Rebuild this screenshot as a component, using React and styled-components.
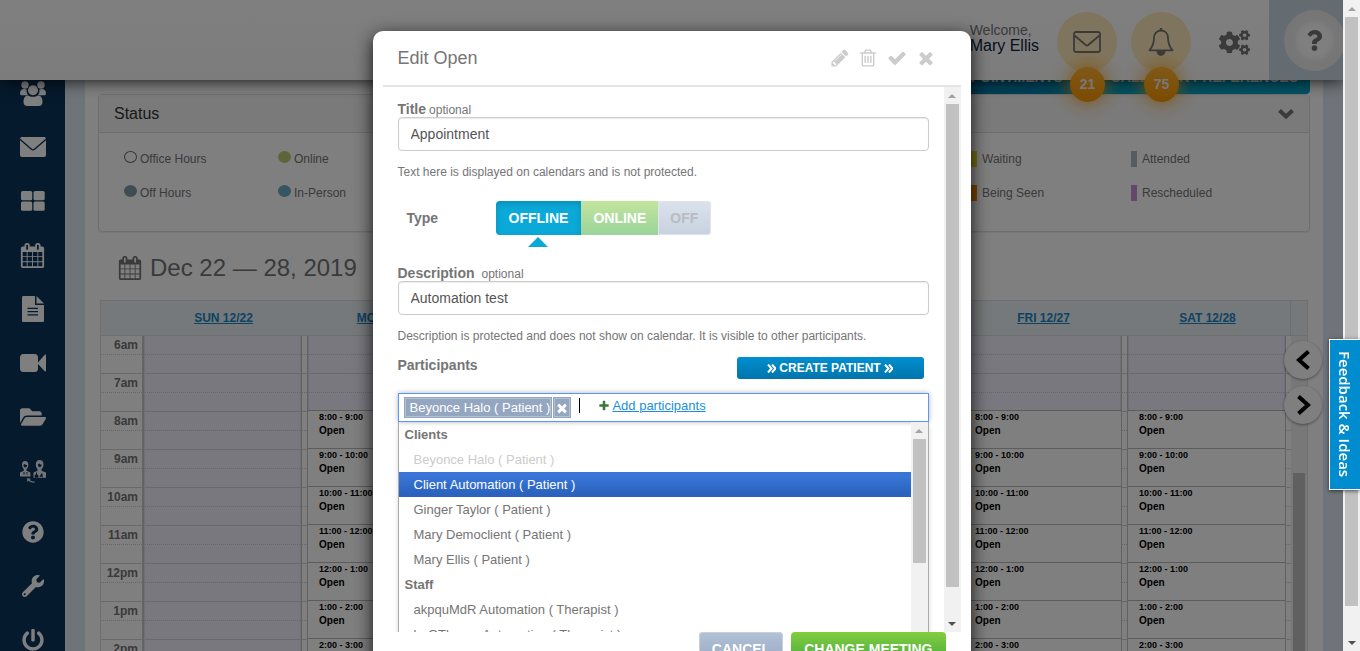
import React from "react";
import styled, { createGlobalStyle, css } from "styled-components";
import {
  FaCogs,
  FaFolderOpen,
  FaPowerOff,
  FaQuestion,
  FaQuestionCircle,
  FaWrench,
} from "react-icons/fa";

const Global = createGlobalStyle`
  *, *::before, *::after { box-sizing: border-box; }
  html, body, #root { height: 100%; }
  body {
    margin: 0;
    overflow: hidden;
    background: #fff;
    color: #757575;
    font-family: "Liberation Sans", Arial, sans-serif;
    font-size: 12px;
  }
  button, input { font: inherit; }
  button { border: 0; padding: 0; background: none; cursor: pointer; }
  ul { list-style: none; margin: 0; padding: 0; }
`;

/* ---------- icons ---------- */

const paths = {
  pencil:
    "M491 1536l91-91-235-235-91 91v107h128v128h107zm523-928q0-22-22-22-10 0-17 7l-542 542q-7 7-7 17 0 22 22 22 10 0 17-7l542-542q7-7 7-17zm-54-192l416 416-832 832h-416v-416zm683 96q0 53-37 90l-166 166-416-416 166-165q36-38 90-38 53 0 91 38l235 234q37 39 37 91z",
  trash:
    "M704 736v576q0 14-9 23t-23 9h-64q-14 0-23-9t-9-23v-576q0-14 9-23t23-9h64q14 0 23 9t9 23zm256 0v576q0 14-9 23t-23 9h-64q-14 0-23-9t-9-23v-576q0-14 9-23t23-9h64q14 0 23 9t9 23zm256 0v576q0 14-9 23t-23 9h-64q-14 0-23-9t-9-23v-576q0-14 9-23t23-9h64q14 0 23 9t9 23zm128 724v-948h-896v948q0 22 7 40.5t14.5 27 10.5 8.5h832q3 0 10.5-8.5t14.5-27 7-40.5zm-672-1076h448l-48-117q-7-9-17-11h-317q-10 2-17 11zm928 32v64q0 14-9 23t-23 9h-96v948q0 83-47 143.5t-113 60.5h-832q-66 0-113-58.5t-47-141.5v-952h-96q-14 0-23-9t-9-23v-64q0-14 9-23t23-9h309l70-167q15-37 54-63t79-26h320q40 0 79 26t54 63l70 167h309q14 0 23 9t9 23z",
  check:
    "M1671 566q0 40-28 68l-724 724-136 136q-28 28-68 28t-68-28l-136-136-362-362q-28-28-28-68t28-68l136-136q28-28 68-28t68 28l294 295 656-657q28-28 68-28t68 28l136 136q28 28 28 68z",
  times:
    "M1490 1322q0 40-28 68l-136 136q-28 28-68 28t-68-28l-294-294-294 294q-28 28-68 28t-68-28l-136-136q-28-28-28-68t28-68l294-294-294-294q-28-28-28-68t28-68l136-136q28-28 68-28t68 28l294 294 294-294q28-28 68-28t68 28l136 136q28 28 28 68t-28 68l-294 294 294 294q28 28 28 68z",
  plus:
    "M1600 736v192q0 40-28 68t-68 28h-416v416q0 40-28 68t-68 28h-192q-40 0-68-28t-28-68v-416h-416q-40 0-68-28t-28-68v-192q0-40 28-68t68-28h416v-416q0-40 28-68t68-28h192q40 0 68 28t28 68v416h416q40 0 68 28t28 68z",
  calendar:
    "M192 1664h288v-288h-288v288zm352 0h320v-288h-320v288zm-352-352h288v-320h-288v320zm352 0h320v-320h-320v320zm-352-384h288v-288h-288v288zm736 736h320v-288h-320v288zm-384-736h320v-288h-320v288zm768 736h288v-288h-288v288zm-384-352h320v-320h-320v320zm-352-864v-288q0-13-9.5-22.5t-22.5-9.5h-64q-13 0-22.5 9.5t-9.5 22.5v288q0 13 9.5 22.5t22.5 9.5h64q13 0 22.5-9.5t9.5-22.5zm736 864h288v-320h-288v320zm-384-384h320v-288h-320v288zm384 0h288v-288h-288v288zm32-480v-288q0-13-9.5-22.5t-22.5-9.5h-64q-13 0-22.5 9.5t-9.5 22.5v288q0 13 9.5 22.5t22.5 9.5h64q13 0 22.5-9.5t9.5-22.5zm384-64v1280q0 52-38 90t-90 38h-1408q-52 0-90-38t-38-90v-1280q0-52 38-90t90-38h128v-96q0-66 47-113t113-47h64q66 0 113 47t47 113v96h384v-96q0-66 47-113t113-47h64q66 0 113 47t47 113v96h128q52 0 90 38t38 90z",
};

const Glyph = ({ name, size }) => (
  <svg width={size} height={size} viewBox="0 0 1792 1792" fill="currentColor" aria-hidden="true">
    <path d={paths[name]} />
  </svg>
);

const GroupIcon = () => (
  <svg width="26" height="25" viewBox="0 0 26 25" fill="currentColor" aria-hidden="true">
    <circle cx="5" cy="4" r="3.700" />
    <circle cx="21" cy="4" r="3.700" />
    <path d="M0 12.500C0 9.500 1.500 8 4 8c1 0 2 .3 2.700.7-.4 2.300.2 4.300 1.600 5.600H2.500C1 14.300 0 13.800 0 12.500zM26 12.500C26 9.500 24.500 8 22 8c-1 0-2 .3-2.700.7.4 2.300-.2 4.300-1.600 5.600h5.800c1.500 0 2.500-.5 2.500-1.800z" />
    <circle cx="13" cy="9.300" r="5" />
    <path d="M3.500 21c0-4 1.500-6.500 4.500-6.500 1.500 1 3 1.300 5 1.300s3.500-.3 5-1.300c3 0 4.500 2.500 4.500 6.500 0 2.500-1.500 4-4 4h-11c-2.500 0-4-1.500-4-4z" />
  </svg>
);
const MailIcon = () => (
  <svg width="26" height="20" viewBox="0 0 26 20" fill="currentColor" aria-hidden="true">
    <path d="M2 0h22c1 0 1.700.6 1.900 1.500L14.400 11.600c-.9.8-1.900.8-2.800 0L.1 1.500C.3.600 1 0 2 0z" />
    <path d="M0 3.200l11 9.600c1.300 1 2.700 1 4 0l11-9.600V18c0 1.200-.8 2-2 2H2c-1.200 0-2-.8-2-2z" />
  </svg>
);
const TilesIcon = () => (
  <svg width="24" height="20" viewBox="0 0 24 20" fill="currentColor" aria-hidden="true">
    <rect width="11.200" height="9.200" rx="1.500" />
    <rect x="12.500" width="11.200" height="9.200" rx="1.500" />
    <rect y="10.500" width="11.200" height="9.200" rx="1.500" />
    <rect x="12.500" y="10.500" width="11.200" height="9.200" rx="1.500" />
  </svg>
);
const FileIcon = () => (
  <svg width="22" height="26" viewBox="0 0 22 26" aria-hidden="true">
    <path fill="currentColor" d="M1.500 0H13v9h9v15.500c0 1-.5 1.500-1.500 1.500h-19C.5 26 0 25.500 0 24.500v-23C0 .5.500 0 1.500 0zM14.500 0L22 7.600h-7.500z" />
    <path stroke="#0d355b" strokeWidth="1.300" d="M5.500 12.300h10.500M5.500 15.600h10.500M5.500 18.900h10.500" />
  </svg>
);
const VideoIcon = () => (
  <svg width="26" height="18" viewBox="0 0 26 18" fill="currentColor" aria-hidden="true">
    <rect width="18" height="18" rx="3.500" />
    <path d="M18 8.500L24.500 1c.7-.7 1.500-.4 1.500.5v15c0 .9-.8 1.200-1.500.5L18 10z" />
  </svg>
);
const PeopleIcon = () => (
  <svg width="26" height="23" viewBox="0 0 26 23" fill="currentColor" opacity="0.9" aria-hidden="true">
    <path fillRule="evenodd" d="M5 1c2.200 0 3.400 1.500 3.400 3.700S7.400 8.500 6.500 9v1.800l3.700 1.400.3 4.300H0v-4l3.800-1.700V9C2.500 8 2 6 2 4.500 2 2.200 3 1 5 1zM3.300 5c.2 1.500 1 2.500 2 2.500s1.700-1 1.900-2.500C5.800 5 5 4.500 4.700 3.700 4.400 4.400 4 4.700 3.300 5zM3.500 12v2.500h1V12zm3 0v2.500h1V12z" />
    <path fillRule="evenodd" d="M19.500 0c2.500 0 4 1.600 4 4.200S22.300 8.500 21.500 9v1.800l4.500 1.700v5.300H13.500v-5.300l4-1.700V9c-1-1-1.700-2.600-1.700-4.600C15.800 1.600 17.200 0 19.500 0zm-1.700 4.500c.2 1.500 1 2.700 2 2.700s1.700-1 1.900-2.500c-1.400-.2-2-.7-2.400-1.500-.3.700-.8 1-1.500 1.300zM16 12.500v1.700a2 2 0 1 0 1 0v-1.700zm6 .2l-2.700 4 3.700.1z" />
    <path d="M7 18.300l4 .4-1.400 1.200c1.500 1.200 3 1.500 5 1.500v1.300c-2.700 0-4.600-.6-6-1.900L7.500 22z" />
  </svg>
);
const MailOutline = () => (
  <svg width="28" height="22" viewBox="0 0 28 22" fill="none" stroke="currentColor" strokeWidth="1.800" aria-hidden="true">
    <rect x="1" y="1" width="26" height="20" rx="2" />
    <path d="M1.500 4.500l11 9.300c1 .9 2 .9 3 0l11-9.300" />
  </svg>
);
const BellOutline = () => (
  <svg width="26" height="28" viewBox="0 0 26 28" fill="none" stroke="currentColor" strokeWidth="1.800" aria-hidden="true">
    <path d="M13 2.700c-4.600 0-7 3.300-7 7.300 0 6.500-1.800 9-4.500 12.300h23C21.800 19 20 16.500 20 10c0-4-2.400-7.300-7-7.300z" strokeLinejoin="round" />
    <path d="M9.500 23.500a3.500 3.500 0 0 0 7 0z" fill="currentColor" />
    <path d="M13 0v3" strokeWidth="2.500" />
  </svg>
);
const Chevron = ({ d, w, h, stroke }) => (
  <svg width={w} height={h} viewBox={`0 0 ${w} ${h}`} fill="none" stroke="currentColor" strokeWidth={stroke} aria-hidden="true">
    <path d={d} />
  </svg>
);
const DoubleRight = () => <Chevron w={9} h={9} stroke={2} d="M1 0.500l3.500 4L1 8.500M5 0.500l3.500 4L5 8.500" />;

/* ---------- page frame ---------- */

const Page = styled.div`
  display: flex;
  height: 100vh;
  overflow: hidden;
`;
const Site = styled.div`
  position: relative;
  flex: 1;
  min-width: 0;
  display: flex;
  flex-direction: column;
  overflow: hidden;
`;
const TopBar = styled.header`
  position: relative;
  z-index: 2;
  flex: none;
  height: 80px;
  display: flex;
  justify-content: flex-end;
  align-items: center;
  background: linear-gradient(#fff, #f9f9f9);
  box-shadow: 0 0 16px rgba(0, 0, 0, 0.9);
`;
const Greeting = styled.div`
  margin: 0 18px 4px 0;
  font-size: 14px;
  line-height: 16px;
  strong {
    display: block;
    color: #0c2238;
    font-weight: 400;
    font-size: 16px;
  }
`;
const Alert = styled.button`
  position: relative;
  display: flex;
  align-items: center;
  justify-content: center;
  width: 60px;
  height: 60px;
  margin: 4px 14px 0 0;
  border-radius: 50%;
  background: #ffeabd;
  color: #757575;
`;
const Count = styled.span`
  position: absolute;
  top: 55px;
  left: 13px;
  width: 35px;
  height: 35px;
  border-radius: 50%;
  background: linear-gradient(#ffb130, #fa9600);
  box-shadow: 0 0 20px #fc9f12;
  color: #eee;
  font-size: 14px;
  font-weight: 700;
  line-height: 35px;
`;
const Settings = styled.button`
  display: flex;
  margin: 4px 19px 0 14px;
  color: #757575;
`;
const Help = styled.div`
  display: flex;
  align-items: center;
  justify-content: flex-end;
  width: 74px;
  height: 80px;
  overflow: hidden;
  background: #c8d6e3;
`;
const HelpButton = styled.button`
  flex: none;
  display: flex;
  align-items: center;
  justify-content: center;
  width: 61px;
  height: 61px;
  margin-right: -2px;
  border: 8px solid #ededee;
  border-radius: 50%;
  background: #fff;
  color: #757575;
  box-shadow: inset 0 0 10px #d8d8d8;
`;
const Middle = styled.div`
  flex: 1;
  min-height: 0;
  display: flex;
  overflow: hidden;
  background: #dee8f2;
`;
const Sidebar = styled.nav`
  flex: none;
  width: 65px;
  overflow: hidden;
  background: #0c345a;
  ul { margin-top: -14px; }
  li:nth-child(9) { margin-top: 7px; }
`;
const NavLink = styled.a`
  display: flex;
  align-items: center;
  justify-content: center;
  height: 54px;
  color: #fff;
`;
const Content = styled.main`
  flex: 1;
  min-width: 0;
  margin: 0 20px;
  padding: 0 13px;
  overflow: hidden;
  background: #fff;
`;
const TabRow = styled.div`
  display: flex;
  justify-content: flex-end;
  height: 40px;
  margin-top: -26px;
`;
const Tab = styled.button`
  height: 40px;
  padding: ${(p) => (p.$last ? "6px 12px 0 36px" : "6px 12px 0")};
  background: ${(p) => (p.$last ? "#00a5c8" : "linear-gradient(90deg, #0074ab, #008fb8)")};
  border-radius: ${(p) => (p.$last ? "0 4px 4px 0" : "4px 0 0 4px")};
  color: #fff;
  font-size: 14px;
  font-weight: 700;
`;
const Panel = styled.section`
  border: 1px solid #ddd;
  border-radius: 4px;
  box-shadow: 0 1px 1px #eee;
`;
const PanelHead = styled.header`
  display: flex;
  align-items: center;
  justify-content: space-between;
  height: 38px;
  padding: 0 15px;
  border-bottom: 1px solid #ddd;
  background: #f5f5f5;
  color: #333;
  font-size: 16px;
  button { display: flex; color: #757575; }
`;
const Legend = styled.div`
  display: flex;
  justify-content: space-between;
  height: 98px;
  padding: 18px 18px 0 25px;
`;
const LegendGroup = styled.ul`
  display: grid;
  grid-template-columns: ${(p) => `repeat(2, ${p.$col})`};
  grid-auto-rows: 34px;
`;
const LegendItem = styled.li`
  display: flex;
  height: 16px;
  line-height: 16px;
  gap: ${(p) => (p.$round ? "3px" : "5px")};
  &::before {
    content: "";
    width: ${(p) => (p.$round ? "13px" : "6px")};
    height: ${(p) => (p.$round ? "12px" : "16px")};
    border: ${(p) => (p.$outline ? "1px solid #666" : "0")};
    border-radius: ${(p) => (p.$round ? "50%" : "0")};
    background: ${(p) => p.$color};
  }
`;
const WeekTitle = styled.h2`
  display: flex;
  align-items: center;
  gap: 8px;
  margin: 0;
  padding: 4px 20px 0;
  height: 68px;
  color: #757575;
  font-size: 24px;
  font-weight: 400;
`;

/* ---------- calendar ---------- */

const Calendar = styled.div`
  display: grid;
  grid-template-columns: 42px repeat(7, 1fr) 16px;
  margin: 0 2px;
  border: 1px solid #ddd;
`;
const DayHead = styled.div`
  height: 35px;
  padding-right: 3px;
  border-bottom: 1px solid #ddd;
  background: #ecf2f6;
  text-align: center;
  font-weight: 700;
  line-height: 34px;
  a { color: #1a86c4; }
`;
const CornerHead = styled(DayHead)`
  border-left: ${(p) => (p.$line ? "1px solid #ddd" : "0")};
  margin-left: ${(p) => (p.$line ? "-1px" : "0")};
`;
const Hour = styled.div`
  height: 38px;
  border-bottom: 1px solid #d3d3d3;
  &::before {
    content: "";
    display: block;
    height: 19px;
    border-bottom: 1px dotted #ccc;
  }
`;
const HourLabel = styled.div`
  height: 38px;
  border-bottom: 1px solid #d3d3d3;
  border-right: 1px solid #ccc;
  color: #757575;
  text-align: right;
  font-weight: 700;
  span {
    display: block;
    height: 19px;
    padding-right: 4px;
    border-bottom: 1px dotted #ccc;
    line-height: 18px;
  }
`;
const Day = styled.div`
  display: flex;
`;
const Lane = styled.div`
  flex: 1;
  min-width: 0;
  border-left: 1px solid #c4c4c4;
  border-right: 1px solid #c4c4c4;
`;
const Closed = styled.div`
  border: solid #dfdbef;
  border-width: 0 1px;
  background: #f4f0ff;
`;
const Gutter = styled.div`
  flex: none;
  width: 5px;
`;
const Bookings = styled.div`
  margin-top: -2px;
`;
const Booking = styled.div`
  height: 38px;
  padding-left: 11px;
  border-top: 1px solid #b8b8b8;
  background: #fff;
  color: #000;
  font-size: 10px;
  font-weight: 700;
  line-height: 13px;
  white-space: nowrap;
  time { display: block; font-size: 9px; }
`;

/* ---------- scroll bars ---------- */

const Bar = styled.div`
  display: flex;
  flex-direction: column;
  flex: none;
  width: ${(p) => p.$w || "17px"};
  background: #f1f1f1;
`;
const Arrow = styled.span`
  flex: none;
  display: flex;
  align-items: center;
  justify-content: center;
  height: 17px;
  &::before {
    content: "";
    border: 4px solid transparent;
    border-top-width: ${(p) => (p.$down ? "4px" : "0")};
    border-bottom-width: ${(p) => (p.$down ? "0" : "4px")};
    border-top-color: #505050;
    border-bottom-color: #a3a3a3;
  }
`;
const Thumb = styled.span`
  flex: ${(p) => p.$grow || 1};
  margin: 0 2px;
  background: #c1c1c1;
`;
const Track = styled.span`
  flex: ${(p) => p.$grow || 1};
`;

/* ---------- floating parts ---------- */

const WeekNav = styled.div`
  position: absolute;
  z-index: 1;
  right: 21px;
  top: 341px;
  display: flex;
  flex-direction: column;
  gap: 7px;
`;
const RoundButton = styled.button`
  display: flex;
  align-items: center;
  justify-content: center;
  width: 38px;
  height: 38px;
  border-radius: 50%;
  background: #fff;
  color: #000;
  box-shadow: 0 1px 3px rgba(0, 0, 0, 0.4);
`;
const Feedback = styled.a`
  position: fixed;
  z-index: 5;
  right: 0;
  top: 339px;
  display: flex;
  align-items: center;
  justify-content: center;
  width: 31px;
  height: 151px;
  border: 1px solid #fff;
  border-right: 0;
  background: #008ccf;
  box-shadow: 0 1px 4px rgba(0, 0, 0, 0.6);
  color: #fff;
  font-family: "Open Sans", "Noto Sans", sans-serif;
  font-size: 15px;
  font-weight: 600;
  text-decoration: none;
  writing-mode: vertical-rl;
`;
const Shade = styled.div`
  position: absolute;
  z-index: 3;
  inset: 0;
  display: flex;
  justify-content: center;
  align-items: flex-start;
  padding-top: 31px;
  overflow: hidden;
  background: rgba(0, 0, 0, 0.5);
`;

/* ---------- dialog ---------- */

const Dialog = styled.section`
  width: 598px;
  padding: 0 10px 10px;
  border-radius: 10px;
  background: #fff;
  box-shadow: 0 5px 18px rgba(0, 0, 0, 0.85);
`;
const DialogHead = styled.header`
  display: flex;
  align-items: center;
  justify-content: space-between;
  height: 56px;
  padding: 0 25px 0 15px;
  border-bottom: 2px solid #e5e5e5;
  h1 { margin: 0; color: #757575; font-size: 18px; font-weight: 400; }
`;
const Tools = styled.div`
  display: flex;
  gap: 9px;
  button { display: flex; color: #ccc; }
  button:first-child { margin-right: -1px; }
`;
const DialogBody = styled.div`
  display: flex;
  height: calc(100vh - 106px);
`;
const Form = styled.form`
  flex: 1;
  min-width: 0;
  padding: 14px 15px 0;
  overflow: hidden;
`;
const Field = styled.div``;
const Label = styled.label`
  display: flex;
  align-items: baseline;
  gap: ${(p) => p.$gap || "3px"};
  height: 16px;
  font-size: 14px;
  font-weight: 700;
  line-height: 16px;
  small { font-size: 12px; font-weight: 400; }
`;
const TextInput = styled.input`
  display: block;
  width: 100%;
  height: 34px;
  padding: 0 12px;
  border: 1px solid #ccc;
  border-radius: 4px;
  box-shadow: inset 0 1px 1px rgba(0, 0, 0, 0.08);
  color: #555;
  font-size: 14px;
`;
const Hint = styled.p`
  margin: 13px 0 0;
  line-height: 16px;
`;
const TypeRow = styled.div`
  display: flex;
  margin: 21px 0 30px 9px;
  strong { width: 89px; font-size: 14px; line-height: 34px; }
`;
const Segments = styled.div`
  display: flex;
`;
const segmentTone = {
  blue: css`
    padding: 0 13px;
    background: #0ba9d8;
    box-shadow: inset 0 3px 6px rgba(0, 0, 0, 0.15);
    color: #fff;
    border-radius: 4px 0 0 4px;
  `,
  green: css`
    padding: 0 12px;
    background: linear-gradient(#c2e59d, #9bd39b);
    color: #fff;
  `,
  grey: css`
    padding: 0 13px 0 12px;
    background: linear-gradient(#dae2ec, #c8d2e0);
    box-shadow: inset 0 0 0 1px #dfe4ea;
    color: #b9bcc0;
    border-radius: 0 4px 4px 0;
  `,
};
const Segment = styled.button`
  position: relative;
  height: 34px;
  font-size: 14px;
  font-weight: 700;
  ${(p) => segmentTone[p.$tone]}
  &[aria-pressed="true"]::after {
    content: "";
    position: absolute;
    top: 36px;
    left: calc(50% - 10px);
    border: 10px solid transparent;
    border-top-width: 0;
    border-bottom-color: #0ba9d8;
  }
`;
const ParticipantsHead = styled.div`
  display: flex;
  justify-content: space-between;
  align-items: flex-start;
  margin: 13px 5px 14px 0;
`;
const CreateButton = styled.button`
  display: flex;
  align-items: center;
  justify-content: center;
  gap: 3px;
  width: 187px;
  height: 22px;
  border-radius: 3px;
  background: linear-gradient(#008fd0, #0074ab);
  color: #fff;
  font-size: 12px;
  font-weight: 700;
`;
const Picker = styled.div`
  display: flex;
  height: 29px;
  padding: 3px 5px;
  border: 1px solid #5897fb;
  box-shadow: 0 0 5px rgba(0, 0, 0, 0.3);
`;
const Chip = styled.span`
  display: flex;
  height: 21px;
  font-size: 13px;
  color: #fff;
  span, button {
    display: flex;
    align-items: center;
    border: 1px solid #b3c0d3;
    outline: 1px solid #94a6c0;
    outline-offset: -1px;
    background: #94a6c0;
    box-shadow: inset 0 0 0 1px #b3c0d3;
  }
  span { padding: 0 1px 0 5px; }
  button { margin-left: 1px; width: 18px; justify-content: center; color: #fff; }
`;
const Search = styled.input`
  width: 25px;
  height: 20px;
  padding: 0;
  border: 0;
  outline: 0;
`;
const Caret = styled.span`
  width: 1px;
  height: 15px;
  margin: 1px 0 0 8px;
  background: #000;
`;
const AddLink = styled.a`
  display: flex;
  gap: 2px;
  height: 17px;
  margin-left: -7px;
  align-items: center;
  color: #1991d8;
  font-size: 13px;
  svg { color: #3c763d; }
`;
const Drop = styled.div`
  display: flex;
  border: solid #aaa;
  border-width: 0 1px;
  box-shadow: 0 4px 5px rgba(0, 0, 0, 0.15);
`;
const Options = styled.ul`
  flex: 1;
  font-size: 13px;
  line-height: 25px;
`;
const GroupName = styled.li`
  height: 25px;
  padding-left: 6px;
  font-weight: 700;
`;
const Option = styled.li`
  height: 25px;
  padding-left: 15px;
  color: ${(p) => (p.$state === "active" ? "#fff" : p.$state === "disabled" ? "#ccc" : "#757575")};
  background: ${(p) => (p.$state === "active" ? "linear-gradient(#3875d7 20%, #2a62bc 90%)" : "none")};
`;
const DialogFoot = styled.footer`
  display: flex;
  justify-content: flex-end;
  gap: 8px;
  padding-right: 15px;
`;
const FootButton = styled.button`
  height: 34px;
  padding: 0 13px;
  border-radius: 4px;
  background: ${(p) => (p.$main ? "linear-gradient(#85cc40, #3caa3c)" : "linear-gradient(#b2c2d7, #94a6c0)")};
  box-shadow: ${(p) => (p.$main ? "none" : "inset 0 0 0 1px #ccd0d4")};
  color: #fff;
  font-size: 14px;
  font-weight: 700;
`;

const nav = [
  ["Groups", <GroupIcon />],
  ["Messages", <MailIcon />],
  ["Dashboard", <TilesIcon />],
  ["Calendar", <Glyph name="calendar" size={25} />],
  ["Notes", <FileIcon />],
  ["Video", <VideoIcon />],
  ["Files", <FaFolderOpen size={26} />],
  ["Staff", <PeopleIcon />],
  ["Support", <FaQuestionCircle size={22} />],
  ["Tools", <FaWrench size={22} />],
  ["Log out", <FaPowerOff size={22} />],
];
const days = ["SUN 12/22", "MON 12/23", "TUE 12/24", "WED 12/25", "THU 12/26", "FRI 12/27", "SAT 12/28"];
const hours = ["6am", "7am", "8am", "9am", "10am", "11am", "12pm", "1pm", "2pm"];
const bookings = [
  "8:00 - 9:00",
  "9:00 - 10:00",
  "10:00 - 11:00",
  "11:00 - 12:00",
  "12:00 - 1:00",
  "1:00 - 2:00",
  "2:00 - 3:00",
];
const clients = [
  ["Beyonce Halo ( Patient )", "disabled"],
  ["Client Automation ( Patient )", "active"],
  ["Ginger Taylor ( Patient )"],
  ["Mary Democlient ( Patient )"],
  ["Mary Ellis ( Patient )"],
];
const staff = ["akpquMdR Automation ( Therapist )", "hoGTherap Automation ( Therapist )"];

const HourLines = ({ count }) => Array.from({ length: count }, (_, i) => <Hour key={i} />);

function WeekCalendar() {
  return (
    <Calendar>
      <CornerHead />
      {days.map((d) => (
        <DayHead key={d}>
          <a href="#day">{d}</a>
        </DayHead>
      ))}
      <CornerHead $line />
      <div>
        {hours.map((h) => (
          <HourLabel key={h}>
            <span>{h}</span>
          </HourLabel>
        ))}
      </div>
      {days.map((d, i) => (
        <Day key={d}>
          <Lane>
            <Closed>
              <HourLines count={i === 0 ? 9 : 2} />
            </Closed>
            {i > 0 && (
              <Bookings>
                {bookings.map((b) => (
                  <Booking key={b}>
                    <time>{b}</time>
                    Open
                  </Booking>
                ))}
              </Bookings>
            )}
          </Lane>
          <Gutter>
            <HourLines count={9} />
          </Gutter>
        </Day>
      ))}
      <Bar $w="16px">
        <Track $grow={137} />
        <Thumb $grow={205} />
      </Bar>
    </Calendar>
  );
}

function EditDialog() {
  return (
    <Dialog role="dialog" aria-label="Edit Open">
      <DialogHead>
        <h1>Edit Open</h1>
        <Tools>
          <button aria-label="Edit"><Glyph name="pencil" size={20} /></button>
          <button aria-label="Delete"><Glyph name="trash" size={20} /></button>
          <button aria-label="Confirm"><Glyph name="check" size={20} /></button>
          <button aria-label="Close"><Glyph name="times" size={20} /></button>
        </Tools>
      </DialogHead>
      <DialogBody>
        <Form>
          <Field>
            <Label htmlFor="title">Title <small>optional</small></Label>
            <TextInput id="title" defaultValue="Appointment" />
            <Hint>Text here is displayed on calendars and is not protected.</Hint>
          </Field>
          <TypeRow>
            <strong>Type</strong>
            <Segments>
              <Segment type="button" $tone="blue" aria-pressed="true">OFFLINE</Segment>
              <Segment type="button" $tone="green">ONLINE</Segment>
              <Segment type="button" $tone="grey">OFF</Segment>
            </Segments>
          </TypeRow>
          <Field>
            <Label htmlFor="description" $gap="7px">Description <small>optional</small></Label>
            <TextInput id="description" defaultValue="Automation test" />
            <Hint>Description is protected and does not show on calendar. It is visible to other participants.</Hint>
          </Field>
          <ParticipantsHead>
            <Label htmlFor="participants">Participants</Label>
            <CreateButton type="button">
              <DoubleRight />
              CREATE PATIENT
              <DoubleRight />
            </CreateButton>
          </ParticipantsHead>
          <Picker>
            <Chip>
              <span>Beyonce Halo ( Patient )</span>
              <button type="button" aria-label="Remove"><Glyph name="times" size={14} /></button>
            </Chip>
            <Caret />
            <Search id="participants" />
            <AddLink href="#add"><Glyph name="plus" size={12} />Add participants</AddLink>
          </Picker>
          <Drop>
            <Options role="listbox" aria-label="Participants">
              <GroupName>Clients</GroupName>
              {clients.map(([name, state]) => (
                <Option key={name} role="option" $state={state}>{name}</Option>
              ))}
              <GroupName>Staff</GroupName>
              {staff.map((name) => (
                <Option key={name} role="option">{name}</Option>
              ))}
            </Options>
            <Bar>
              <Arrow />
              <Thumb $grow={124} />
              <Track $grow={84} />
            </Bar>
          </Drop>
        </Form>
        <Bar>
          <Arrow />
          <Thumb $grow={484} />
          <Track $grow={28} />
          <Arrow $down />
        </Bar>
      </DialogBody>
      <DialogFoot>
        <FootButton type="button">CANCEL</FootButton>
        <FootButton type="button" $main>CHANGE MEETING</FootButton>
      </DialogFoot>
    </Dialog>
  );
}

export default function App() {
  return (
    <Page>
      <Global />
      <Site>
        <TopBar>
          <Greeting>
            Welcome, <strong>Mary Ellis</strong>
          </Greeting>
          <Alert aria-label="Messages"><MailOutline /><Count>21</Count></Alert>
          <Alert aria-label="Notifications"><BellOutline /><Count>75</Count></Alert>
          <Settings aria-label="Settings"><FaCogs size={31} /></Settings>
          <Help>
            <HelpButton aria-label="Help"><FaQuestion size={21} /></HelpButton>
          </Help>
        </TopBar>
        <Middle>
          <Sidebar>
            <ul>
              {nav.map(([label, icon]) => (
                <li key={label}>
                  <NavLink href="#nav" aria-label={label}>{icon}</NavLink>
                </li>
              ))}
            </ul>
          </Sidebar>
          <Content>
            <TabRow>
              <Tab>APPOINTMENTS</Tab>
              <Tab $last>CALENDAR PREFERENCES</Tab>
            </TabRow>
            <Panel>
              <PanelHead>
                Status
                <button aria-label="Collapse">
                  <Chevron w={16} h={10} stroke={4} d="M1.500 1.500l6.500 6 6.500-6" />
                </button>
              </PanelHead>
              <Legend>
                <LegendGroup $col="154px">
                  <LegendItem $round $outline $color="#fff">Office Hours</LegendItem>
                  <LegendItem $round $color="#bccb72">Online</LegendItem>
                  <LegendItem $round $color="#7d9aa6">Off Hours</LegendItem>
                  <LegendItem $round $color="#6aa8c8">In-Person</LegendItem>
                </LegendGroup>
                <LegendGroup $col="160px">
                  <LegendItem $color="#e6d92c">Waiting</LegendItem>
                  <LegendItem $color="#aabbc0">Attended</LegendItem>
                  <LegendItem $color="#f08a00">Being Seen</LegendItem>
                  <LegendItem $color="#c890d8">Rescheduled</LegendItem>
                </LegendGroup>
              </Legend>
            </Panel>
            <WeekTitle>
              <Glyph name="calendar" size={24} />
              Dec 22 — 28, 2019
            </WeekTitle>
            <WeekCalendar />
          </Content>
        </Middle>
        <WeekNav>
          <RoundButton aria-label="Previous week">
            <Chevron w={16} h={20} stroke={4} d="M13.500 1.500L4 10l9.500 8.500" />
          </RoundButton>
          <RoundButton aria-label="Next week">
            <Chevron w={16} h={20} stroke={4} d="M3.500 1.500L13 10l-9.500 8.500" />
          </RoundButton>
        </WeekNav>
        <Shade>
          <EditDialog />
        </Shade>
      </Site>
      <Bar>
        <Arrow />
        <Thumb $grow={589} />
        <Track $grow={28} />
        <Arrow $down />
      </Bar>
      <Feedback href="#feedback">Feedback &amp; Ideas</Feedback>
    </Page>
  );
}
